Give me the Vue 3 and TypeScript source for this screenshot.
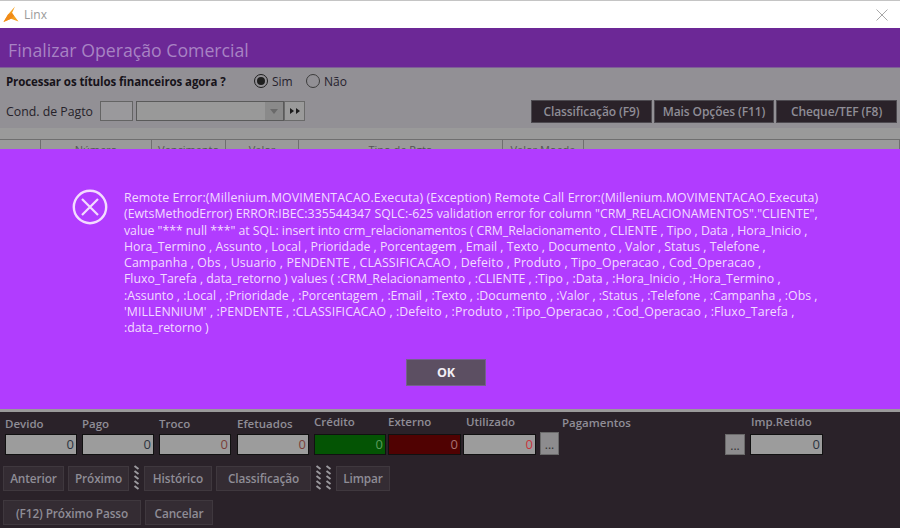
<script setup lang="ts">
const lines: { text: string; spacing: number }[] = [
  { text: 'Remote Error:(Millenium.MOVIMENTACAO.Executa) (Exception) Remote Call Error:(Millenium.MOVIMENTACAO.Executa)', spacing: 0.12 },
  { text: '(EwtsMethodError) ERROR:IBEC:335544347 SQLC:-625 validation error for column "CRM_RELACIONAMENTOS"."CLIENTE",', spacing: 0.03 },
  { text: 'value "*** null ***" at SQL: insert into crm_relacionamentos ( CRM_Relacionamento , CLIENTE , Tipo , Data , Hora_Inicio ,', spacing: -0.025 },
  { text: 'Hora_Termino , Assunto , Local , Prioridade , Porcentagem , Email , Texto , Documento , Valor , Status , Telefone ,', spacing: 0 },
  { text: 'Campanha , Obs , Usuario , PENDENTE , CLASSIFICACAO , Defeito , Produto , Tipo_Operacao , Cod_Operacao ,', spacing: 0.14 },
  { text: 'Fluxo_Tarefa , data_retorno ) values ( :CRM_Relacionamento , :CLIENTE , :Tipo , :Data , :Hora_Inicio , :Hora_Termino ,', spacing: 0 },
  { text: ':Assunto , :Local , :Prioridade , :Porcentagem , :Email , :Texto , :Documento , :Valor , :Status , :Telefone , :Campanha , :Obs ,', spacing: 0 },
  { text: "'MILLENNIUM' , :PENDENTE , :CLASSIFICACAO , :Defeito , :Produto , :Tipo_Operacao , :Cod_Operacao , :Fluxo_Tarefa ,", spacing: 0.09 },
  { text: ':data_retorno )', spacing: 0 },
]
const columns = [
  { label: '', w: 41 },
  { label: 'Número', w: 111 },
  { label: 'Vencimento', w: 74 },
  { label: 'Valor', w: 73 },
  { label: 'Tipo de Pgto', w: 204 },
  { label: 'Valor Moeda', w: 81 },
  { label: ' ', w: 316 },
]
const fields = [
  { label: 'Devido', w: 72, cls: 'dark', up: false },
  { label: 'Pago', w: 72, cls: 'dark', up: false },
  { label: 'Troco', w: 72, cls: 'brown', up: false },
  { label: 'Efetuados', w: 72, cls: 'brown', up: false },
  { label: 'Crédito', w: 72, cls: 'green', up: true },
  { label: 'Externo', w: 73, cls: 'maroon', up: true },
  { label: 'Utilizado', w: 73, cls: 'red', up: true },
]
const dashes = [1, 6, 11, 16, 21]
</script>

<template>
  <div class="window">
    <div class="titlebar">
      <svg class="logo" width="16" height="17" viewBox="0 0 16 17">
        <path d="M12 0.5 L9 7 L15.5 15.5 L8 12.8 L0.5 16 L5 8.5 Z" fill="#f5a01e" />
        <path d="M0.5 16 L5 8.5 L9 7 L11 9.8 L8 12.8 Z" fill="#f08a18" />
      </svg>
      <span class="app-name">Linx</span>
      <svg class="close" width="12" height="12" viewBox="0 0 12 12">
        <path d="M0.5 0.5 L11.5 11.5 M11.5 0.5 L0.5 11.5" stroke="#a8a8a8" stroke-width="1" fill="none" />
      </svg>
    </div>
    <div class="header">Finalizar Operação Comercial</div>
    <div class="top-panel">
      <div class="question-row">
        <b class="question">Processar os títulos financeiros agora ?</b>
        <span class="radio on"><i></i></span><span class="radio-label">Sim</span>
        <span class="radio no"></span><span class="radio-label">Não</span>
      </div>
      <div class="cond-row">
        <span class="cond-label">Cond. de Pagto</span>
        <span class="cond-code"></span>
        <span class="combo"><span class="combo-arrow"><em></em></span></span>
        <span class="next-btn">
          <svg width="10" height="6" viewBox="0 0 10 6"><path d="M0 0 L4 3 L0 6 Z M6 0 L10 3 L6 6 Z" fill="#1c1c1c" /></svg>
        </span>
        <div class="top-actions">
          <span class="top-btn b1">Classificação (F9)</span>
          <span class="top-btn b2">Mais Opções (F11)</span>
          <span class="top-btn b3">Cheque/TEF (F8)</span>
        </div>
      </div>
    </div>
    <div class="table-area">
      <div class="table-head">
        <span v-for="c in columns" :key="c.label" class="th" :style="{ width: c.w + 'px' }">{{ c.label }}</span>
      </div>
    </div>
    <div class="banner">
      <div class="banner-body">
        <svg class="err-icon" width="36" height="36" viewBox="0 0 36 36">
          <circle cx="18" cy="18" r="16.2" fill="none" stroke="#f3dcff" stroke-width="2.4" />
          <path d="M10 10 L26 26 M26 10 L10 26" stroke="#f3dcff" stroke-width="2.2" fill="none" />
        </svg>
        <div class="msg">
          <div v-for="(l, i) in lines" :key="i" class="msg-line" :style="{ letterSpacing: l.spacing + 'px' }">{{ l.text }}</div>
        </div>
      </div>
      <div class="ok-wrap"><span class="ok">OK</span></div>
    </div>
    <div class="bottom">
      <div class="field-row">
        <div v-for="f in fields" :key="f.label" class="field" :class="{ up: f.up }" :style="{ width: f.w + 'px' }">
          <span class="f-label">{{ f.label }}</span>
          <span class="f-input" :class="f.cls">0</span>
        </div>
        <span class="dots d1">...</span>
        <span class="f-label pay">Pagamentos</span>
        <span class="dots d2">...</span>
        <div class="field imp up">
          <span class="f-label">Imp.Retido</span>
          <span class="f-input dark tall">0</span>
        </div>
      </div>
      <div class="btn-row r1">
        <span class="btn w-ant">Anterior</span>
        <span class="btn w-ant">Próximo</span>
        <svg class="grip" width="7" height="26" viewBox="0 0 7 26">
          <path v-for="y in dashes" :key="y" :d="`M1.5 ${y} L5.5 ${y + 3}`" />
        </svg>
        <span class="btn w-hist">Histórico</span>
        <span class="btn w-cls">Classificação</span>
        <svg class="grip" width="7" height="26" viewBox="0 0 7 26">
          <path v-for="y in dashes" :key="y" :d="`M1.5 ${y} L5.5 ${y + 3}`" />
        </svg>
        <svg class="grip second" width="7" height="26" viewBox="0 0 7 26">
          <path v-for="y in dashes" :key="y" :d="`M1.5 ${y} L5.5 ${y + 3}`" />
        </svg>
        <span class="btn w-lim">Limpar</span>
      </div>
      <div class="btn-row r2">
        <span class="btn w-f12">(F12) Próximo Passo</span>
        <span class="btn w-can">Cancelar</span>
      </div>
    </div>
  </div>
</template>

<style>
html, body { margin: 0; background: #2a2229; }
</style>

<style scoped>
.window {
  width: 900px;
  height: 528px;
  overflow: hidden;
  display: flex;
  flex-direction: column;
  font-family: "Open Sans", "Noto Sans", sans-serif;
}
.titlebar {
  height: 27px;
  flex: none;
  display: flex;
  align-items: center;
  background: #fff;
  border-top: 1px solid #c4c4c4;
  padding: 0 12px 0 3px;
}
.logo { margin-right: 5px; }
.app-name { font-size: 12px; color: #9a9a9a; }
.close { margin-left: auto; }
.header {
  height: 40px;
  flex: none;
  box-sizing: border-box;
  background: #6c2896;
  color: #a883c4;
  font-size: 17.7px;
  line-height: 44px;
  padding-left: 8px;
  border-bottom: 1px solid #7e5f96;
}
.top-panel {
  height: 60px;
  flex: none;
  box-sizing: border-box;
  background: #929095;
  padding: 5px 0 0 6px;
}
.question-row {
  display: flex;
  align-items: center;
  height: 16px;
  font-size: 11.5px;
}
.question { color: #17131a; width: 248px; font-weight: 700; letter-spacing: -0.1px; }
.radio {
  width: 14px;
  height: 14px;
  box-sizing: border-box;
  border: 1px solid #1e1e1e;
  border-radius: 50%;
  display: inline-flex;
  align-items: center;
  justify-content: center;
}
.radio i { width: 8px; height: 8px; border-radius: 50%; background: #1e1e1e; }
.radio.no { border-color: #3c3c3c; }
.radio-label { color: #26222e; font-size: 12px; margin-left: 4px; width: 34px; }
.cond-row {
  display: flex;
  align-items: center;
  height: 24px;
  margin-top: 10px;
}
.cond-label { font-size: 12.3px; color: #26222a; width: 94px; }
.cond-code {
  width: 33px;
  height: 20px;
  box-sizing: border-box;
  border: 1px solid #646464;
  background: #9a999c;
  margin-right: 3px;
}
.combo {
  width: 148px;
  height: 20px;
  box-sizing: border-box;
  border: 1px solid #5a5a5a;
  background: #999999;
  display: flex;
  justify-content: flex-end;
}
.combo-arrow {
  width: 18px;
  background: #8a8a8a;
  display: flex;
  align-items: center;
  justify-content: center;
}
.combo-arrow em {
  width: 0;
  height: 0;
  border-left: 4px solid transparent;
  border-right: 4px solid transparent;
  border-top: 5px solid #6a6a6a;
}
.next-btn {
  width: 21px;
  height: 20px;
  box-sizing: border-box;
  border: 1px solid #6a6a6a;
  background: #9a9a9a;
  display: flex;
  align-items: center;
  justify-content: center;
}
.top-actions {
  margin-left: auto;
  display: flex;
  margin-right: 3px;
}
.top-btn {
  height: 23px;
  box-sizing: border-box;
  background: #2a2229;
  border: 1px solid #4d4a50;
  color: #8f8d96;
  font-size: 12px;
  font-weight: 600;
  display: flex;
  align-items: center;
  justify-content: center;
  letter-spacing: -0.1px;
}
.b1 { width: 121px; margin-right: 2px; }
.b2 { width: 120px; margin-right: 2px; }
.b3 { width: 121px; }
.table-area {
  height: 21px;
  flex: none;
  box-sizing: border-box;
  background: #9a9a9a;
  padding-top: 11px;
  overflow: hidden;
}
.table-head {
  display: flex;
  height: 30px;
  border-top: 1px solid #6f6f6f;
}
.th {
  box-sizing: border-box;
  flex: none;
  border-right: 1px solid #6f6f6f;
  font-size: 11px;
  text-align: center;
  color: #555;
  padding-top: 2px;
  white-space: nowrap;
  overflow: hidden;
}
.banner {
  height: 260px;
  flex: none;
  background: #b13cff;
  box-sizing: border-box;
  padding-top: 40px;
  display: flex;
  flex-direction: column;
}
.banner-body { display: flex; padding-left: 72px; }
.err-icon { flex: none; }
.msg { margin-left: 16px; color: #f3dcff; font-size: 12.3px; line-height: 16.25px; margin-top: 1px; }
.msg-line { white-space: nowrap; }
.ok-wrap { display: flex; justify-content: center; margin-top: 23px; padding-right: 8px; }
.ok {
  width: 80px;
  height: 27px;
  box-sizing: border-box;
  background: #5c4f62;
  color: #f2eef5;
  font-weight: 700;
  font-size: 12.5px;
  display: flex;
  align-items: center;
  justify-content: center;
  border: 1px solid #74628c;
}
.bottom {
  flex: 1;
  background: #2a2229;
  border-top: 3px solid #9a9a9a;
  box-sizing: border-box;
  padding-left: 3px;
}
.field-row {
  display: flex;
  height: 43px;
  align-items: flex-end;
  padding-left: 2px;
  gap: 0 5px;
}
.field {
  display: flex;
  flex-direction: column;
  flex: none;
}
.f-label { font-size: 11.5px; font-weight: 600; color: #8f8d96; height: 16px; line-height: 16px; white-space: nowrap; margin-bottom: 2px; }
.field.up .f-label { margin-bottom: 4px; }
.f-input {
  height: 21px;
  box-sizing: border-box;
  border: 1px solid #111;
  background: #9c9c9c;
  font-size: 13px;
  line-height: 19px;
  text-align: right;
  padding-right: 2px;
}
.dark { color: #2c3440; }
.brown { color: #7a3f3a; }
.red { color: #c8343c; }
.green { background: #045404; color: #5c9c5c; }
.maroon { background: #500202; color: #a87070; }
.field:nth-child(4) { margin-left: 1px; }
.field:nth-child(6), .field:nth-child(7) { margin-left: -3px; }
.field:nth-child(7) .f-label { padding-left: 3px; }
.dots {
  width: 19px;
  height: 23px;
  box-sizing: border-box;
  background: #8d8c8e;
  border: 1px solid #6a6a6a;
  color: #333;
  font-size: 12px;
  text-align: center;
  line-height: 24px;
  flex: none;
}
.d1 { margin-left: -1px; }
.pay { align-self: flex-start; margin: 3px 0 0 -2px; width: 158px; }
.d2 { width: 20px; height: 21px; line-height: 22px; }
.imp { width: 73px; }
.imp .f-label { padding-left: 1px; }
.btn-row { display: flex; gap: 4px; align-items: center; }
.r1 { margin-top: 10px; }
.r2 { margin-top: 9px; }
.btn {
  height: 25px;
  box-sizing: border-box;
  background: #342c33;
  border: 1px solid #3f383e;
  color: #8f8d96;
  font-size: 11.8px;
  font-weight: 600;
  display: flex;
  align-items: center;
  justify-content: center;
  white-space: nowrap;
  flex: none;
  letter-spacing: -0.1px;
}
.w-ant { width: 61px; }
.w-hist { width: 68px; }
.w-cls { width: 95px; }
.w-lim { width: 54px; }
.w-f12 { width: 138px; }
.w-can { width: 68px; }
.grip { flex: none; }
.grip path { stroke: #9b999e; stroke-width: 2; fill: none; }
.grip.second { margin-left: -1px; }
</style>
